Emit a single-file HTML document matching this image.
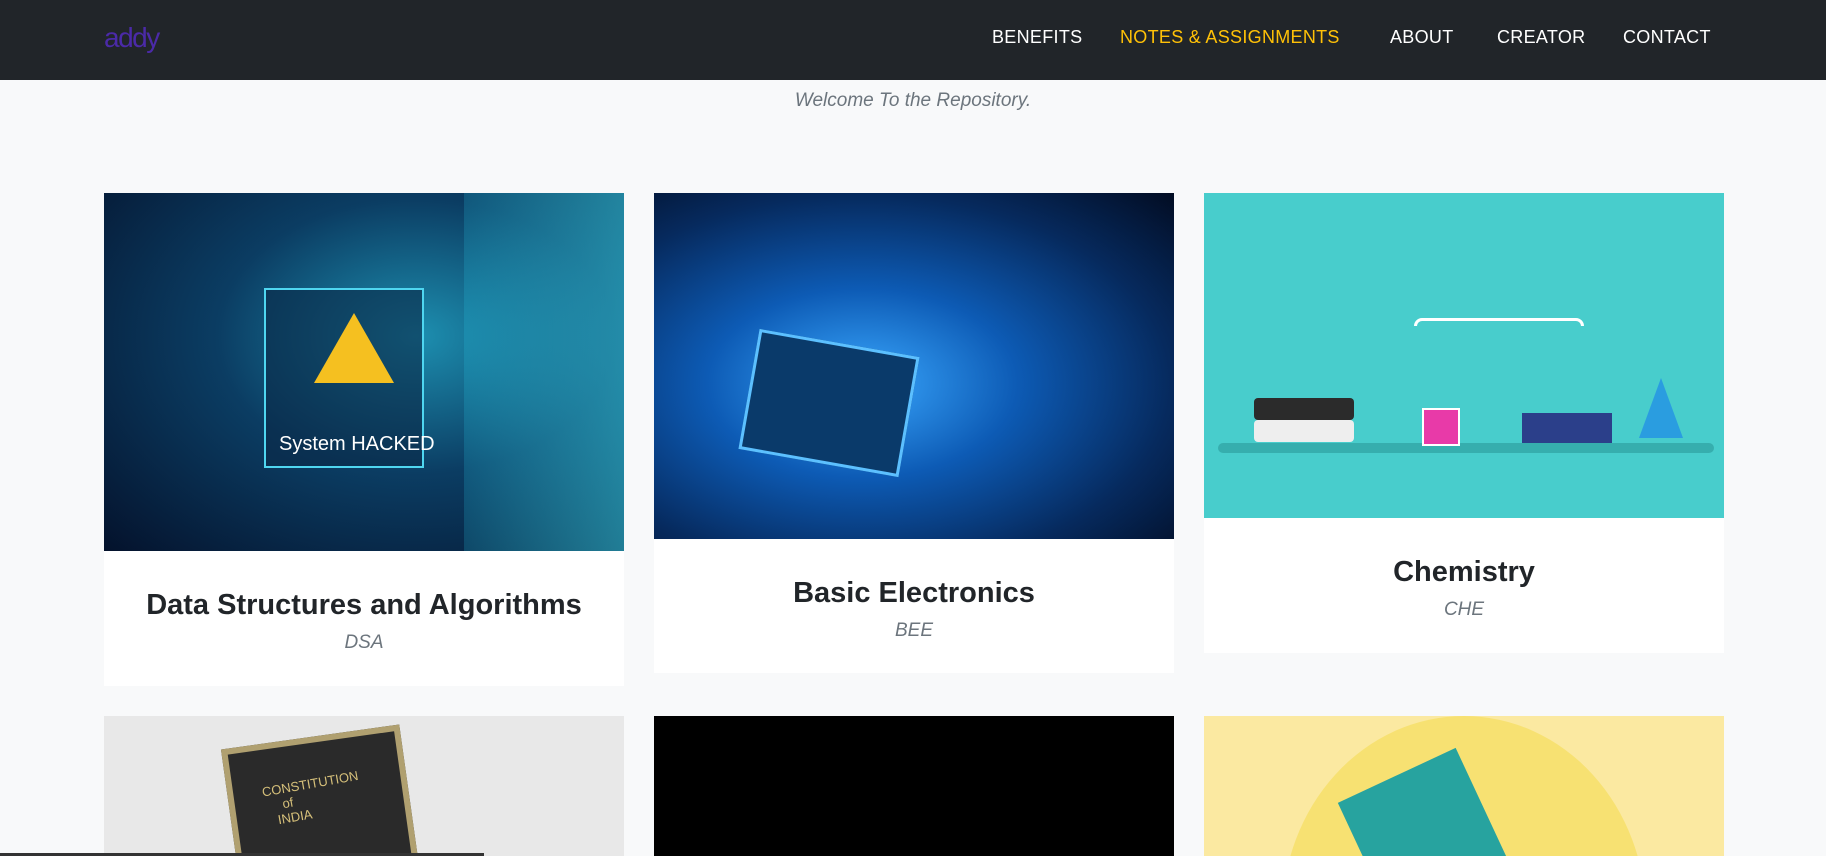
<!DOCTYPE html>
<html style="width:1826px;height:856px;overflow:hidden"><head><meta charset="utf-8"><style>
*{margin:0;padding:0;box-sizing:border-box}
body{width:1826px;height:856px;overflow:hidden;background:#f8f9fa;font-family:"Liberation Sans",sans-serif;position:relative}
.nav{position:absolute;left:0;top:0;width:1826px;height:80px;background:#212529}
.logo{position:absolute;left:104px;top:22px;color:#4b2aa8;font-size:28px;letter-spacing:-1.5px}
.nav a{position:absolute;top:27px;color:#fff;font-size:18px;text-decoration:none;letter-spacing:.3px}
.welcome{position:absolute;top:90px;width:100%;text-align:center;color:#6c757d;font-style:italic;font-size:19px}
.card{position:absolute;width:520px;background:#fff;overflow:hidden}
.img{position:relative;width:100%;overflow:hidden}
.card h2{text-align:center;font-size:29px;color:#212529;margin-top:38px}
.card p{text-align:center;font-style:italic;color:#6c757d;font-size:19px;margin-top:10px}
</style></head><body>
<div class="nav">
<div class="logo">addy</div>
<a style="left:992px">BENEFITS</a>
<a style="left:1120px;color:#ffc107">NOTES &amp; ASSIGNMENTS</a>
<a style="left:1390px">ABOUT</a>
<a style="left:1497px">CREATOR</a>
<a style="left:1623px">CONTACT</a>
</div>
<div class="welcome">Welcome To the Repository.</div>

<div class="card" style="left:104px;top:193px;height:493px">
<div class="img" style="height:358px;background:radial-gradient(ellipse at 60% 40%,#1d8fb0 0%,#0b3d63 45%,#04122c 100%)">
<div style="position:absolute;left:160px;top:95px;width:160px;height:180px;border:2px solid #4fd6f0;background:rgba(10,40,70,.6)"></div>
<div style="position:absolute;left:210px;top:120px;width:0;height:0;border-left:40px solid transparent;border-right:40px solid transparent;border-bottom:70px solid #f5c020"></div>
<div style="position:absolute;left:175px;top:240px;color:#fff;font-size:20px">System HACKED</div>
<div style="position:absolute;right:0;top:0;width:160px;height:358px;background:linear-gradient(90deg,rgba(40,200,230,.2),rgba(60,220,240,.5))"></div>
</div>
<h2>Data Structures and Algorithms</h2><p>DSA</p></div>

<div class="card" style="left:654px;top:193px;height:480px">
<div class="img" style="height:346px;background:radial-gradient(ellipse at 40% 55%,#3aa8ff 0%,#0d5bb5 35%,#062a5e 70%,#020c22 100%)">
<div style="position:absolute;left:95px;top:150px;width:160px;height:120px;background:#0a3a6a;border:3px solid #5cc0ff;transform:skew(-10deg,10deg)"></div>
</div>
<h2>Basic Electronics</h2><p>BEE</p></div>

<div class="card" style="left:1204px;top:193px;height:460px">
<div class="img" style="height:325px;background:#48cdcc">
<div style="position:absolute;left:14px;top:250px;width:496px;height:10px;border-radius:5px;background:#36aeae"></div>
<div style="position:absolute;left:50px;top:205px;width:100px;height:22px;background:#2b2b2b;border-radius:4px"></div>
<div style="position:absolute;left:50px;top:227px;width:100px;height:22px;background:#eee;border-radius:4px"></div>
<div style="position:absolute;left:218px;top:215px;width:38px;height:38px;background:#e83aa8;border:2px solid #fff"></div>
<div style="position:absolute;left:210px;top:125px;width:170px;height:8px;border:3px solid #fff;border-bottom:none;border-radius:20px 20px 0 0"></div>
<div style="position:absolute;left:318px;top:220px;width:90px;height:30px;background:#2b3f8a"></div>
<div style="position:absolute;left:435px;top:185px;width:0;height:0;border-left:22px solid transparent;border-right:22px solid transparent;border-bottom:60px solid #2a9de0"></div>
</div>
<h2>Chemistry</h2><p>CHE</p></div>

<div class="card" style="left:104px;top:716px;height:140px;background:#e8e8e8">
<div style="position:absolute;left:130px;top:20px;width:180px;height:200px;background:#2a2a2a;border:6px solid #b0a070;transform:rotate(-8deg)"></div>
<div style="position:absolute;left:160px;top:60px;color:#d6c07a;font-size:13px;transform:rotate(-10deg)">CONSTITUTION<br>&nbsp;&nbsp;&nbsp;&nbsp;&nbsp;of<br>&nbsp;&nbsp;&nbsp;INDIA</div>
</div>
<div class="card" style="left:654px;top:716px;height:140px;background:#000"></div>
<div class="card" style="left:1204px;top:716px;height:140px;background:#fbe9a1">
<div style="position:absolute;left:78px;top:0;width:364px;height:400px;border-radius:50%;background:#f7e172"></div>
<div style="position:absolute;left:170px;top:50px;width:130px;height:200px;background:#27a39f;transform:rotate(-25deg)"></div>
</div>
<div style="position:absolute;left:0;top:853px;width:484px;height:3px;background:#333"></div>
</body></html>
